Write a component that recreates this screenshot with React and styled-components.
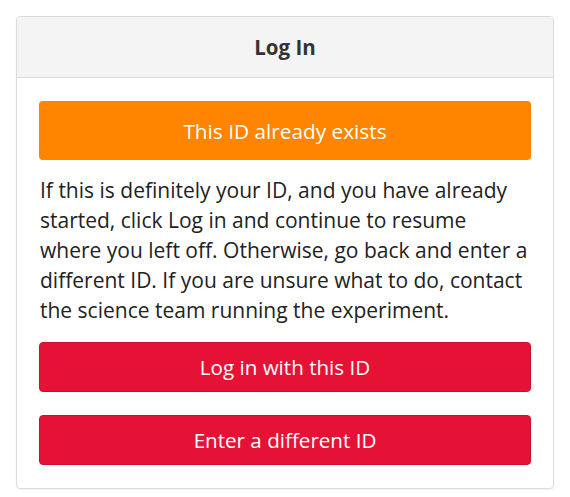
import React from "react";
import styled, { createGlobalStyle } from "styled-components";

const GlobalStyle = createGlobalStyle`
  body {
    margin: 0;
    background: #fff;
    font-family: "Open Sans", "Liberation Sans", sans-serif;
  }
`;

const Card = styled.div`
  margin: 16px;
  border: 1px solid #dcdcdc;
  border-radius: 4px;
  background: #fff;
  box-shadow: 0 1px 2px rgba(0, 0, 0, 0.06);
  overflow: hidden;
`;

const Header = styled.div`
  height: 60px;
  display: flex;
  align-items: center;
  justify-content: center;
  background: #f4f4f4;
  border-bottom: 1px solid #dcdcdc;
  font-size: 20.5px;
  font-weight: 700;
  color: #333;
`;

const Body = styled.div`
  padding: 23px 22px 23px;
  display: flex;
  flex-direction: column;
`;

const Alert = styled.div`
  height: 59px;
  display: flex;
  align-items: center;
  justify-content: center;
  background: #ff8400;
  border-radius: 4px;
  color: #fff;
  font-size: 20.8px;
`;

const Message = styled.p`
  margin: 15px 0 17px 1px;
  font-size: 21px;
  line-height: 30px;
  color: #222;
`;

const Button = styled.button`
  height: 50px;
  margin-top: ${(p) => (p.$first ? "0" : "23px")};
  padding: 0;
  border: 1px solid #c8102e;
  border-radius: 4px;
  background: #e51236;
  color: #fff;
  font-family: inherit;
  font-size: 20.6px;
  cursor: pointer;
`;

export default function App() {
  return (
    <>
      <GlobalStyle />
      <Card>
        <Header>Log In</Header>
        <Body>
          <Alert>This ID already exists</Alert>
          <Message>
            If this is definitely your ID, and you have already started, click
            Log in and continue to resume where you left off. Otherwise, go
            back and enter a different ID. If you are unsure what to do,
            contact the science team running the experiment.
          </Message>
          <Button $first>Log in with this ID</Button>
          <Button>Enter a different ID</Button>
        </Body>
      </Card>
    </>
  );
}
